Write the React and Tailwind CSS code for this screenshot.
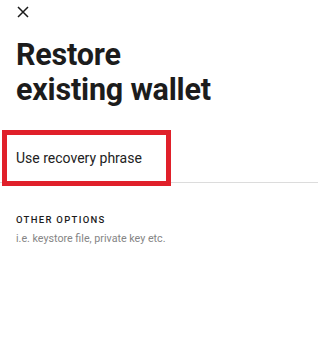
import React from 'react';

const App = () => {
  return (
    <div className="relative w-[318px] h-[340px] bg-white overflow-hidden" style={{ fontFamily: 'Roboto, "Noto Sans", sans-serif' }}>
      {/* Close */}
      <div className="pl-[16px] pt-[5px]">
        <svg width="14" height="14" viewBox="0 0 14 14" className="text-[#1a1a1a]">
          <path d="M2 2 L12 12 M12 2 L2 12" stroke="currentColor" strokeWidth="1.5" fill="none" />
        </svg>
      </div>

      {/* Title */}
      <h1 className="pl-[16px] mt-[18px] text-[30.5px] leading-[35px] font-bold text-[#1c1c1c] tracking-[-0.2px]">
        Restore
        <br />
        existing wallet
      </h1>

      {/* Options */}
      <div className="mt-[28px] h-[48px] flex items-center pl-[16px] border-b border-[#dcdcdc]">
        <span className="text-[14px] text-[#222]">Use recovery phrase</span>
      </div>

      <div className="pl-[16px] mt-[31px]">
        <div className="text-[9.5px] font-medium tracking-[1.3px] text-[#1c1c1c] leading-[12px]">OTHER OPTIONS</div>
        <div className="mt-[6px] text-[10.7px] text-[#858585] leading-[14px]">i.e. keystore file, private key etc.</div>
      </div>

      {/* Highlight annotation */}
      <div className="absolute left-[2px] top-[130px] w-[169px] h-[56px] border-[5px] border-[#e0202a] pointer-events-none" />
    </div>
  );
};

export default App;
